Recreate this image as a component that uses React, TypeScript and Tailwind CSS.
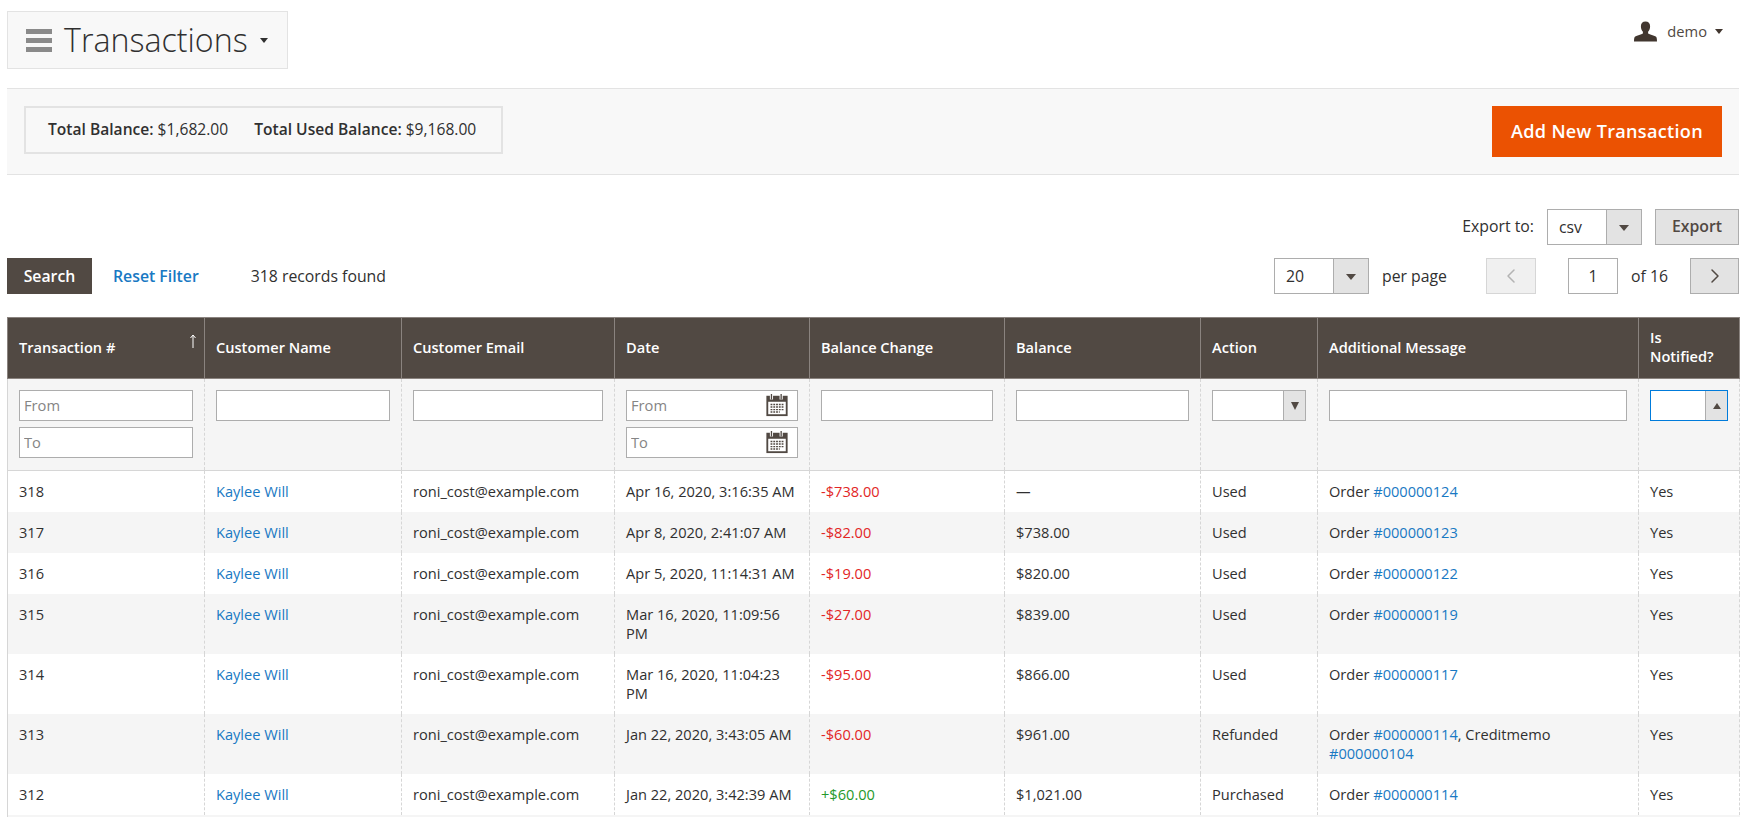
import { ChevronLeft, ChevronRight } from "lucide-react";

const rows = [
  { id: 318, date: "Apr 16, 2020, 3:16:35 AM", change: "-$738.00", balance: "—", action: "Used", order: "#000000124" },
  { id: 317, date: "Apr 8, 2020, 2:41:07 AM", change: "-$82.00", balance: "$738.00", action: "Used", order: "#000000123" },
  { id: 316, date: "Apr 5, 2020, 11:14:31 AM", change: "-$19.00", balance: "$820.00", action: "Used", order: "#000000122" },
  { id: 315, date: "Mar 16, 2020, 11:09:56 PM", change: "-$27.00", balance: "$839.00", action: "Used", order: "#000000119" },
  { id: 314, date: "Mar 16, 2020, 11:04:23 PM", change: "-$95.00", balance: "$866.00", action: "Used", order: "#000000117" },
  { id: 313, date: "Jan 22, 2020, 3:43:05 AM", change: "-$60.00", balance: "$961.00", action: "Refunded", order: "#000000114", memo: "#000000104" },
  { id: 312, date: "Jan 22, 2020, 3:42:39 AM", change: "+$60.00", balance: "$1,021.00", action: "Purchased", order: "#000000114" },
];

const headers = [
  "Customer Name",
  "Customer Email",
  "Date",
  "Balance Change",
  "Balance",
  "Action",
  "Additional Message",
];

const thClass =
  "border border-[#8a837f] bg-[#514943] px-[11px] pt-0 pb-[2px] text-left align-middle text-[14.6px] font-semibold leading-[19px] text-white";
const filterTd = "border-x border-dashed border-[#d6d6d6] px-[11px] pt-[11px] pb-[12px] align-top";
const tdClass = "border-x border-dashed border-[#d6d6d6] px-[11px] py-[11px] align-top text-[14.6px] leading-[19px]";
const inputClass =
  "block h-[31px] w-full border border-[#adadad] bg-white px-[4px] pb-[2px] text-[14.7px] outline-none placeholder:text-[#858585]";

function Caret({ className }: { className: string }) {
  return <span className={`inline-block h-0 w-0 border-x-[4px] border-t-[5px] border-x-transparent ${className}`} />;
}

function CalendarIcon() {
  return (
    <svg viewBox="0 0 24 26" className="absolute right-[9px] top-[3px] h-[24px] w-[24px]">
      <rect x="0.5" y="3" width="23" height="22" fill="#514943" />
      <rect x="2.5" y="9.500" width="19" height="13.5" fill="#fff" />
      <path d="M6 1v6M16.5 1v6" stroke="#fff" strokeWidth="3.4" />
      <path d="M6 1v6M16.5 1v6" stroke="#514943" strokeWidth="1.4" />
      <path
        d="M5 12.5h14M5 15.2h14M5 18h14M5 20.6h10"
        stroke="#514943"
        strokeWidth="1.5"
        strokeDasharray="2 1"
      />
    </svg>
  );
}

function SortArrow() {
  return (
    <svg viewBox="0 0 8 14" className="-mr-[4px] -mt-[13px] h-[14px] w-[8px]">
      <path d="M4 14V1M1.500 4 4 1l2.500 3" fill="none" stroke="#fff" strokeWidth="1" />
    </svg>
  );
}

function DateInput({ placeholder }: { placeholder: string }) {
  return (
    <div className="relative">
      <input className={inputClass} placeholder={placeholder} />
      <CalendarIcon />
    </div>
  );
}

function SelectBox({
  label,
  textW,
  arrowW,
}: {
  label: string;
  textW: string;
  arrowW: string;
}) {
  return (
    <div className="flex h-[36px] border border-[#adadad] bg-white">
      <div className={`${textW} pl-[11px] leading-[35px]`}>{label}</div>
      <div className={`${arrowW} flex items-center justify-center border-l border-[#adadad] bg-[#e3e3e3]`}>
        <span className="mt-[2px] h-0 w-0 border-x-[5px] border-t-[6px] border-x-transparent border-t-[#514943]" />
      </div>
    </div>
  );
}

export default function App() {
  return (
    <div className="h-[817px] overflow-hidden bg-white px-[7px] pr-[10px] font-['Open_Sans',sans-serif] text-[15.8px] text-[#303030]">
      <header className="flex h-[88px] items-start justify-between">
        <div className="mt-[11px] flex h-[58px] w-[281px] items-center border border-[#e3e3e3] bg-[#f8f8f8] pl-[18px]">
          <div className="flex w-[26px] flex-col gap-[4px]">
            <span className="h-[5px] bg-[#8a8a8a]" />
            <span className="h-[5px] bg-[#8a8a8a]" />
            <span className="h-[5px] bg-[#8a8a8a]" />
          </div>
          <h1 className="ml-[12px] text-[32.2px] font-light leading-none text-[#303030]">Transactions</h1>
          <Caret className="ml-[12px] border-t-[#303030]" />
        </div>
        <div className="mr-[16px] mt-[20px] flex items-center text-[14.7px] text-[#514943]">
          <svg viewBox="0 0 24 21" className="h-[21px] w-[23px]">
            <path
              d="M12 0c3 0 4.800 2 4.800 5 0 2.400-.9 4.600-2.100 5.800v1.700c1.700 1 6 2 8 3.200.9.600 1.300 1.800 1.300 5.300H0c0-3.500.4-4.700 1.300-5.300 2-1.200 6.300-2.200 8-3.200v-1.700C8.100 9.600 7.200 7.400 7.200 5 7.200 2 9 0 12 0z"
              fill="#41362f"
            />
          </svg>
          <span className="ml-[10px]">demo</span>
          <Caret className="ml-[8px] border-t-[#41362f]" />
        </div>
      </header>

      <section className="flex h-[87px] items-start justify-between border-y border-[#e3e3e3] bg-[#f8f8f8] px-[17px] pt-[17px]">
        <div className="flex h-[48px] w-[479px] items-center gap-[26px] border-2 border-[#e3e3e3] pl-[22px] text-[15.6px]">
          <span>
            <b className="font-semibold">Total Balance:</b> $1,682.00
          </span>
          <span>
            <b className="font-semibold">Total Used Balance:</b> $9,168.00
          </span>
        </div>
        <button className="h-[51px] w-[230px] bg-[#eb5202] text-[18.1px] font-semibold tracking-[0.3px] text-white">
          Add New Transaction
        </button>
      </section>

      <div className="mt-[34px] flex h-[36px] items-center justify-end">
        <span className="mr-[13px]">Export to:</span>
        <SelectBox label="csv" textW="w-[58px]" arrowW="w-[35px]" />
        <button className="ml-[13px] h-[36px] w-[84px] border border-[#adadad] bg-[#e3e3e3] font-semibold text-[#514943]">
          Export
        </button>
      </div>

      <div className="mt-[13px] flex h-[36px] items-center">
        <button className="h-[36px] w-[85px] bg-[#514943] pt-[1px] font-semibold text-white">Search</button>
        <a className="ml-[21px] pt-[1px] font-semibold text-[#1979c3]">Reset Filter</a>
        <span className="ml-[52px] pt-[1px]">318 records found</span>
        <div className="ml-auto">
          <SelectBox label="20" textW="w-[58px]" arrowW="w-[35px]" />
        </div>
        <span className="ml-[13px] w-[104px] pt-[1px]">per page</span>
        <button className="flex h-[36px] w-[50px] items-center justify-center border border-[#d6d6d6] bg-[#f0f0f0]">
          <ChevronLeft size={24} strokeWidth={1.5} className="text-[#b3b3b3]" />
        </button>
        <input
          className="ml-[32px] h-[36px] w-[50px] border border-[#adadad] text-center outline-none"
          defaultValue="1"
        />
        <span className="ml-[13px] w-[59px] pt-[1px]">of 16</span>
        <button className="flex h-[36px] w-[49px] items-center justify-center border border-[#adadad] bg-[#e3e3e3]">
          <ChevronRight size={24} strokeWidth={1.5} className="text-[#514943]" />
        </button>
      </div>

      <table className="mt-[23px] w-[1732px] table-fixed border-collapse border-l border-[#d6d6d6]">
        <colgroup>
          <col className="w-[197px]" />
          <col className="w-[197px]" />
          <col className="w-[213px]" />
          <col className="w-[195px]" />
          <col className="w-[195px]" />
          <col className="w-[196px]" />
          <col className="w-[117px]" />
          <col className="w-[321px]" />
          <col className="w-[101px]" />
        </colgroup>
        <thead>
          <tr className="h-[61px]">
            <th className={thClass}>
              <div className="flex items-center justify-between">
                Transaction #
                <SortArrow />
              </div>
            </th>
            {headers.map((h) => (
              <th key={h} className={thClass}>
                {h}
              </th>
            ))}
            <th className={thClass}>Is Notified?</th>
          </tr>
          <tr className="h-[91px] border-b border-[#d6d6d6] bg-[#f5f5f5]">
            <td className={filterTd}>
              <div className="flex flex-col gap-[6px]">
                <input className={inputClass} placeholder="From" />
                <input className={inputClass} placeholder="To" />
              </div>
            </td>
            <td className={filterTd}>
              <input className={inputClass} />
            </td>
            <td className={filterTd}>
              <input className={inputClass} />
            </td>
            <td className={filterTd}>
              <div className="flex flex-col gap-[6px]">
                <DateInput placeholder="From" />
                <DateInput placeholder="To" />
              </div>
            </td>
            <td className={filterTd}>
              <input className={inputClass} />
            </td>
            <td className={filterTd}>
              <input className={inputClass} />
            </td>
            <td className={filterTd}>
              <div className="flex h-[31px] justify-end border border-[#adadad] bg-white">
                <div className="flex w-[22px] items-center justify-center border-l border-[#adadad] bg-[#e3e3e3]">
                  <span className="h-0 w-0 border-x-[4px] border-t-[8px] border-x-transparent border-t-[#514943]" />
                </div>
              </div>
            </td>
            <td className={filterTd}>
              <input className={inputClass} />
            </td>
            <td className={filterTd}>
              <div className="flex h-[31px] justify-end border border-[#007bdb] bg-white">
                <div className="flex w-[22px] items-center justify-center border-l border-[#adadad] bg-[#e3e3e3]">
                  <span className="h-0 w-0 border-x-[4px] border-b-[6px] border-x-transparent border-b-[#514943]" />
                </div>
              </div>
            </td>
          </tr>
        </thead>
        <tbody>
          {rows.map((r, i) => (
            <tr key={r.id} className={i % 2 === 1 ? "bg-[#f5f5f5]" : "bg-white"}>
              <td className={tdClass}>{r.id}</td>
              <td className={tdClass}>
                <a className="text-[#1979c3]">Kaylee Will</a>
              </td>
              <td className={tdClass}>roni_cost@example.com</td>
              <td className={tdClass}>{r.date}</td>
              <td className={`${tdClass} ${r.change[0] === "+" ? "text-[#25992a]" : "text-[#e22626]"}`}>{r.change}</td>
              <td className={tdClass}>{r.balance}</td>
              <td className={tdClass}>{r.action}</td>
              <td className={tdClass}>
                Order <a className="text-[#1979c3]">{r.order}</a>
                {r.memo && (
                  <>
                    , Creditmemo <a className="text-[#1979c3]">{r.memo}</a>
                  </>
                )}
              </td>
              <td className={tdClass}>Yes</td>
            </tr>
          ))}
          <tr className="h-[41px] bg-[#f5f5f5]">
            <td colSpan={9} />
          </tr>
        </tbody>
      </table>
    </div>
  );
}
